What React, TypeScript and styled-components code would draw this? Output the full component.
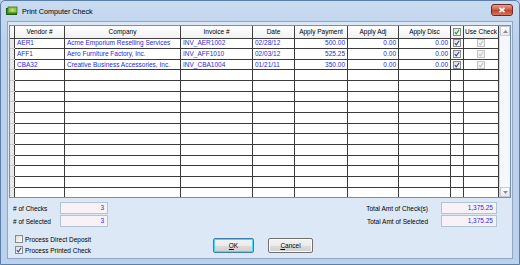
import React from 'react';
import styled, { createGlobalStyle } from 'styled-components';

const GlobalStyle = createGlobalStyle`
  html, body {
    margin: 0;
    padding: 0;
    background: #bcd2ec;
  }
  body {
    font-family: Tahoma, "Liberation Sans", Arial, sans-serif;
  }
`;

const Window = styled.div`
  width: 520px;
  height: 265px;
  box-sizing: border-box;
  display: flex;
  flex-direction: column;
  background: linear-gradient(#c9dbf1, #bcd2ec 40px, #bcd2ec);
  border: 1px solid #5d7fa7;
  border-radius: 5px 5px 0 0;
  overflow: hidden;
`;

const TitleBar = styled.div`
  height: 20px;
  display: flex;
  align-items: center;
  padding: 0 6px 0 5px;
  gap: 4px;
`;

const TitleText = styled.span`
  font-size: 7.2px;
  color: #000;
  flex: 1;
`;

const CloseButton = styled.div`
  width: 22px;
  height: 12px;
  margin-top: -3px;
  border: 1px solid #6b2a22;
  border-radius: 3px;
  background: linear-gradient(#e8a08e, #cf5940 50%, #c0412a 51%, #d8765f);
  display: flex;
  align-items: center;
  justify-content: center;
  box-sizing: border-box;
`;

const Client = styled.div`
  flex: 1;
  margin: 0 6px 5px 6px;
  background: #dce8f6;
  border: 1px solid #8ea7c6;
  display: flex;
  flex-direction: column;
  padding: 3px 1px 0 1px;
`;

const GridFrame = styled.div`
  display: flex;
  height: 173px;
  box-sizing: border-box;
  border: 1px solid #7a8ea8;
  background: #fff;
  overflow: hidden;
`;

const Table = styled.table`
  border-collapse: collapse;
  table-layout: fixed;
  width: 488px;
  font-size: 6.5px;
  align-self: flex-start;
`;

const HeadRow = styled.tr`
  height: 12px;
`;

const Row = styled.tr`
  height: 10.67px;
`;

const HeadCell = styled.th<{ $w: number }>`
  width: ${p => p.$w - 1}px;
  padding: 0;
  font-weight: normal;
  color: #000;
  background: linear-gradient(#ffffff, #f0f0f0);
  border: 1px solid #404040;
  border-top: none;
  text-align: center;
  white-space: nowrap;
  overflow: hidden;
  line-height: 10px;
`;

const RowHead = styled.td`
  padding: 0;
  background: #e9e9e9;
  border: 1px solid #c8c8c8;
  border-right: 1px solid #404040;
  border-left: none;
`;

const Cell = styled.td<{ $align?: string }>`
  padding: 0 2px;
  border: 1px solid #3a3a3a;
  color: #2a2ae0;
  text-align: ${p => p.$align || 'left'};
  white-space: nowrap;
  overflow: hidden;
  line-height: 8px;
`;

const CheckCell = styled.td`
  padding: 0;
  border: 1px solid #3a3a3a;
  text-align: center;
  line-height: 0;
`;

const Box = styled.span<{ $disabled?: boolean }>`
  display: inline-block;
  width: 8px;
  height: 8px;
  box-sizing: border-box;
  border: 1px solid ${p => (p.$disabled ? '#c4c4c4' : '#8a8a8a')};
  background: ${p => (p.$disabled ? '#f4f4f4' : 'linear-gradient(135deg, #dcdcdc, #ffffff)')};
  position: relative;
  vertical-align: middle;
  flex-shrink: 0;
`;

const Scrollbar = styled.div`
  width: 12px;
  display: flex;
  flex-direction: column;
  justify-content: space-between;
  background: #f4f7fb;
  border-left: 1px solid #cdd6e2;
`;

const ScrollArrow = styled.div`
  height: 10px;
  display: flex;
  align-items: center;
  justify-content: center;
  background: linear-gradient(#fdfdfd, #e6e9ee);
  border: 1px solid #c6ccd5;
  box-sizing: border-box;
`;

const Summary = styled.div`
  display: flex;
  justify-content: space-between;
  padding: 4px 14px 0 4px;
`;

const SummaryCol = styled.div`
  display: flex;
  flex-direction: column;
  gap: 1px;
`;

const SummaryRow = styled.div`
  display: flex;
  align-items: center;
  justify-content: flex-end;
`;

const Label = styled.span<{ $w: number; $right?: boolean }>`
  width: ${p => p.$w}px;
  margin-right: ${p => (p.$right ? 13 : 0)}px;
  font-size: 6.5px;
  color: #000;
  text-align: ${p => (p.$right ? 'right' : 'left')};
`;

const ValueBox = styled.div<{ $w: number }>`
  width: ${p => p.$w}px;
  height: 12px;
  box-sizing: border-box;
  background: #f8f2f6;
  border: 1px solid #b3c3d6;
  color: #2a2ae0;
  font-size: 6.5px;
  text-align: right;
  padding: 0 3px;
  line-height: 10px;
`;

const Footer = styled.div`
  display: grid;
  grid-template-columns: 1fr auto 1fr;
  align-items: center;
  padding: 8px 0 0 6px;
`;

const CheckList = styled.div`
  display: flex;
  flex-direction: column;
  gap: 3px;
`;

const CheckItem = styled.label`
  display: flex;
  align-items: center;
  gap: 2px;
  font-size: 6.5px;
  color: #000;
`;

const Buttons = styled.div`
  display: flex;
  gap: 14px;
  margin-top: 2px;
`;

const Button = styled.div<{ $w: number; $focus?: boolean }>`
  width: ${p => p.$w}px;
  height: 15px;
  box-sizing: border-box;
  border: 1px solid ${p => (p.$focus ? '#3c7fb1' : '#707070')};
  border-radius: 2px;
  background: linear-gradient(#f2f2f2, #ebebeb 50%, #dddddd 51%, #cfcfcf);
  box-shadow: ${p => (p.$focus ? 'inset 0 0 0 1px #48d8fb' : 'inset 0 0 0 1px #fafafa')};
  font-size: 6.5px;
  display: flex;
  align-items: center;
  justify-content: center;
  color: #000;
`;

const Check = ({ color = '#2b3f9e' }: { color?: string }) => (
  <svg width="6" height="6" viewBox="0 0 6 6" style={{ position: 'absolute', left: 0, top: 0 }}>
    <path d="M0.8 3.2 L2.3 4.8 L5.2 0.8" stroke={color} strokeWidth="1.1" fill="none" />
  </svg>
);

const CheckBox = ({ checked, disabled, color }: { checked?: boolean; disabled?: boolean; color?: string }) => (
  <Box $disabled={disabled}>{checked && <Check color={disabled ? '#c0c0c0' : color} />}</Box>
);

const columns = [
  { key: 'vendor', title: 'Vendor #', w: 50 },
  { key: 'company', title: 'Company', w: 116 },
  { key: 'invoice', title: 'Invoice #', w: 72 },
  { key: 'date', title: 'Date', w: 42 },
  { key: 'payment', title: 'Apply Payment', w: 53, right: true },
  { key: 'adj', title: 'Apply Adj', w: 51, right: true },
  { key: 'disc', title: 'Apply Disc', w: 52, right: true },
];

const rows = [
  { vendor: 'AER1', company: 'Acme Emporium Reselling Services', invoice: 'INV_AER1002', date: '02/28/12', payment: '500.00', adj: '0.00', disc: '0.00' },
  { vendor: 'AFF1', company: 'Aero Furniture Factory, Inc.', invoice: 'INV_AFF1010', date: '02/03/12', payment: '525.25', adj: '0.00', disc: '0.00' },
  { vendor: 'CBA32', company: 'Creative Business Accessories, Inc.', invoice: 'INV_CBA1004', date: '01/21/11', payment: '350.00', adj: '0.00', disc: '0.00' },
];

const TOTAL_ROWS = 15;

const App = () => {
  const filler = Array.from({ length: TOTAL_ROWS - rows.length });

  return (
    <>
      <GlobalStyle />
      <Window>
        <TitleBar>
          <svg width="12" height="10" viewBox="0 0 12 10">
            <rect x="0.5" y="2.5" width="10" height="6" fill="#3d9a36" stroke="#1f5c1a" />
            <rect x="2" y="1" width="9" height="6" fill="#8bc94a" stroke="#2f6f1f" strokeWidth="0.8" />
            <circle cx="6.5" cy="4" r="1.6" fill="#f0d23a" />
          </svg>
          <TitleText>Print Computer Check</TitleText>
          <CloseButton>
            <svg width="8" height="6" viewBox="0 0 8 6">
              <path d="M1.5 0.8 L6.5 5.2 M6.5 0.8 L1.5 5.2" stroke="#fff" strokeWidth="1.6" />
            </svg>
          </CloseButton>
        </TitleBar>
        <Client>
          <GridFrame>
            <Table>
              <thead>
                <HeadRow>
                  <HeadCell $w={5} style={{ borderLeft: 'none' }} />
                  {columns.map(c => (
                    <HeadCell key={c.key} $w={c.w}>{c.title}</HeadCell>
                  ))}
                  <HeadCell $w={13} style={{ lineHeight: 0 }}>
                    <CheckBox checked color="#1d9a1d" />
                  </HeadCell>
                  <HeadCell $w={35}>Use Check</HeadCell>
                </HeadRow>
              </thead>
              <tbody>
                {rows.map((r, i) => (
                  <Row key={i}>
                    <RowHead />
                    {columns.map(c => (
                      <Cell key={c.key} $align={c.right ? 'right' : 'left'}>
                        {(r as Record<string, string>)[c.key]}
                      </Cell>
                    ))}
                    <CheckCell><CheckBox checked /></CheckCell>
                    <CheckCell><CheckBox checked disabled /></CheckCell>
                  </Row>
                ))}
                {filler.map((_, i) => (
                  <Row key={`f${i}`}>
                    <RowHead />
                    {columns.map(c => (
                      <Cell key={c.key} />
                    ))}
                    <CheckCell />
                    <CheckCell />
                  </Row>
                ))}
              </tbody>
            </Table>
            <Scrollbar>
              <ScrollArrow>
                <svg width="5" height="3" viewBox="0 0 5 3"><path d="M0 3 L2.5 0 L5 3 Z" fill="#8a8a8a" /></svg>
              </ScrollArrow>
              <ScrollArrow>
                <svg width="5" height="3" viewBox="0 0 5 3"><path d="M0 0 L2.5 3 L5 0 Z" fill="#8a8a8a" /></svg>
              </ScrollArrow>
            </Scrollbar>
          </GridFrame>
          <Summary>
            <SummaryCol>
              <SummaryRow>
                <Label $w={47}># of Checks</Label>
                <ValueBox $w={48}>3</ValueBox>
              </SummaryRow>
              <SummaryRow>
                <Label $w={47}># of Selected</Label>
                <ValueBox $w={48}>3</ValueBox>
              </SummaryRow>
            </SummaryCol>
            <SummaryCol>
              <SummaryRow>
                <Label $w={100} $right>Total Amt of Check(s)</Label>
                <ValueBox $w={56}>1,375.25</ValueBox>
              </SummaryRow>
              <SummaryRow>
                <Label $w={100} $right>Total Amt of Selected</Label>
                <ValueBox $w={56}>1,375.25</ValueBox>
              </SummaryRow>
            </SummaryCol>
          </Summary>
          <Footer>
            <CheckList>
              <CheckItem><CheckBox />Process Direct Deposit</CheckItem>
              <CheckItem><CheckBox checked />Process Printed Check</CheckItem>
            </CheckList>
            <Buttons>
              <Button $w={41} $focus><u>O</u>K</Button>
              <Button $w={45}><u>C</u>ancel</Button>
            </Buttons>
            <div />
          </Footer>
        </Client>
      </Window>
    </>
  );
};

export default App;
